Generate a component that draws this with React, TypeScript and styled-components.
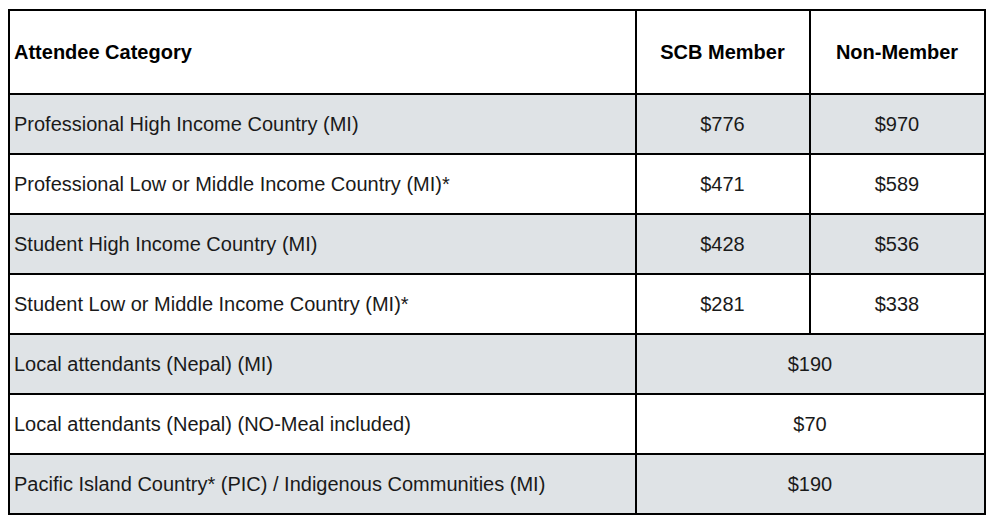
import React from "react";
import styled, { createGlobalStyle } from "styled-components";

const Global = createGlobalStyle`
  html, body { margin: 0; padding: 0; background: #ffffff; }
  body { font-family: "Liberation Sans", Arial, sans-serif; color: #111; }
`;

const Page = styled.div`
  padding: 9px 0 0 8px;
`;

const Table = styled.table`
  border-collapse: collapse;
  table-layout: fixed;
  width: 976px;
  border: 2px solid #000;
`;

const HeadCell = styled.th<{ $align?: "left" | "center" }>`
  border: 2px solid #000;
  height: 82px;
  padding: 0 5px 0 4px;
  font-size: 20px;
  font-weight: bold;
  text-align: ${(p) => p.$align ?? "center"};
  background: #fff;
  color: #000;
`;

const Row = styled.tr<{ $shaded: boolean }>`
  background: ${(p) => (p.$shaded ? "#dfe3e6" : "#ffffff")};
`;

const Cell = styled.td<{ $align?: "left" | "center" }>`
  border: 2px solid #000;
  height: 58px;
  padding: 0 5px 0 4px;
  font-size: 20px;
  text-align: ${(p) => p.$align ?? "center"};
  color: #1a1a1a;
`;

type Item = { label: string; member: string; non?: string };

const rows: Item[] = [
  { label: "Professional High Income Country (MI)", member: "$776", non: "$970" },
  { label: "Professional Low or Middle Income Country (MI)*", member: "$471", non: "$589" },
  { label: "Student High Income Country (MI)", member: "$428", non: "$536" },
  { label: "Student Low or Middle Income Country (MI)*", member: "$281", non: "$338" },
  { label: "Local attendants (Nepal) (MI)", member: "$190" },
  { label: "Local attendants (Nepal) (NO-Meal included)", member: "$70" },
  { label: "Pacific Island Country* (PIC) / Indigenous Communities (MI)", member: "$190" },
];

export default function App() {
  return (
    <Page>
      <Global />
      <Table>
        <colgroup>
          <col style={{ width: 627 }} />
          <col style={{ width: 174 }} />
          <col style={{ width: 175 }} />
        </colgroup>
        <thead>
          <tr>
            <HeadCell $align="left">Attendee Category</HeadCell>
            <HeadCell>SCB Member</HeadCell>
            <HeadCell>Non-Member</HeadCell>
          </tr>
        </thead>
        <tbody>
          {rows.map((r, i) => (
            <Row key={i} $shaded={i % 2 === 0}>
              <Cell $align="left">{r.label}</Cell>
              {r.non ? (
                <>
                  <Cell>{r.member}</Cell>
                  <Cell>{r.non}</Cell>
                </>
              ) : (
                <Cell colSpan={2}>{r.member}</Cell>
              )}
            </Row>
          ))}
        </tbody>
      </Table>
    </Page>
  );
}
